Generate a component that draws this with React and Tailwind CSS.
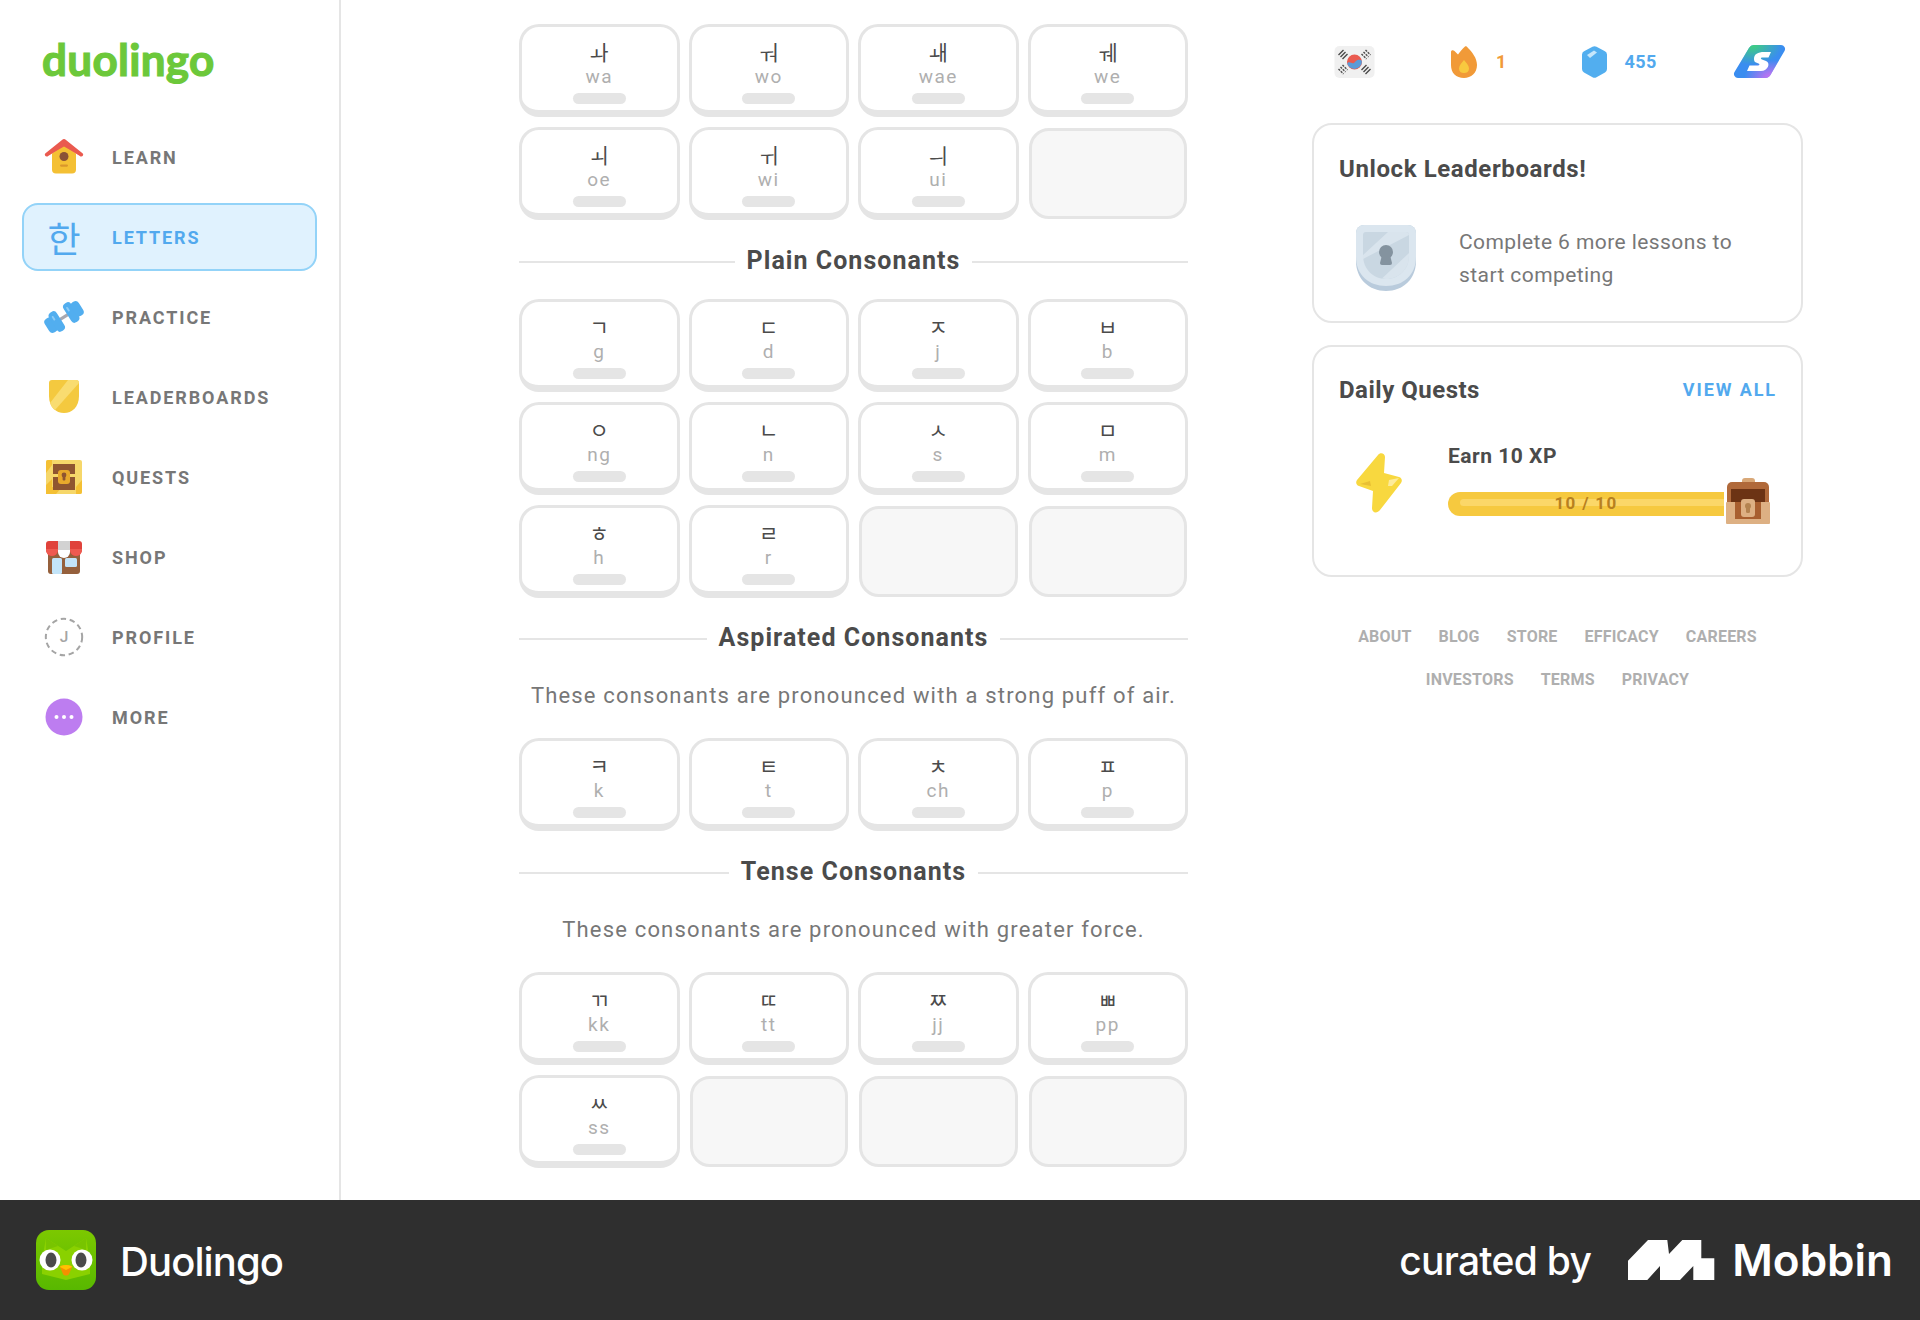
import React from 'react';

const DIN = 'font-[Roboto,"Noto_Sans_CJK_KR",sans-serif]';

function HouseIcon() {
  return (
    <svg width="40" height="40" viewBox="0 0 40 40">
      <g transform="translate(0 1.5)">
        <path d="M8 15 L20 6 L32 15 V31 a4 4 0 0 1 -4 4 H12 a4 4 0 0 1 -4 -4 Z" fill="#f4c034" />
        <path d="M1 17 a2 2 0 0 1 .8 -2.6 L18 1.5 a3 3 0 0 1 4 0 L38.200 14.4 a2 2 0 0 1 .8 2.6 c-.8 1.3 -2.2 1.3 -3.2 .5 L20 7 L4.200 17.5 c-1 .8 -2.4 .8 -3.2 -.5 Z" fill="#ea5a4f" />
        <path d="M20 5 L35 16.500 L20 8 L5 16.500 Z" fill="#ea5a4f" />
        <circle cx="20" cy="18" r="4.5" fill="#8a5236" />
        <rect x="16" y="26" width="8" height="2.2" rx="1.1" fill="#d9962b" />
      </g>
    </svg>
  );
}

function DumbbellIcon() {
  return (
    <svg width="40" height="40" viewBox="0 0 40 40">
      <g transform="rotate(-32 20 20)">
        <rect x="8" y="18.500" width="24" height="3" fill="#a8a8b0" />
        <rect x="0" y="12" width="9" height="16" rx="4" fill="#52aeef" />
        <rect x="7" y="9" width="9" height="22" rx="4" fill="#52aeef" />
        <rect x="24" y="9" width="9" height="22" rx="4" fill="#52aeef" />
        <rect x="31" y="12" width="9" height="16" rx="4" fill="#52aeef" />
        <rect x="9.500" y="13" width="2" height="5" rx="1" fill="#8ccbf6" />
        <rect x="26.500" y="13" width="2" height="5" rx="1" fill="#8ccbf6" />
      </g>
    </svg>
  );
}

function BoardIcon() {
  return (
    <svg width="40" height="40" viewBox="0 0 40 40">
      <path d="M5 6 a3 3 0 0 1 3 -3 H32 a3 3 0 0 1 3 3 V19 C35 30 28 36 20 36 S5 30 5 19 Z" fill="#f4c93f" />
      <path d="M24 3 H32 a3 3 0 0 1 3 3 V6 L11 33 C9 32 7 29 6 26 Z" fill="#f9dc70" />
    </svg>
  );
}

function ChestIcon() {
  return (
    <svg width="40" height="40" viewBox="0 0 40 40">
      <rect x="2" y="3" width="36" height="34" rx="2" fill="#f6d76a" />
      <path d="M2 5 a2 2 0 0 1 2 -2 H8 V8 L2 16 Z M32 37 V30 L38 23 V35 a2 2 0 0 1 -2 2 Z M2 37 V28 L8 22 V30 H18 L12 37 Z" fill="#f4c034" />
      <rect x="9" y="7" width="22" height="26" fill="#8f5530" />
      <rect x="9" y="17" width="22" height="3" fill="#f6d76a" />
      <rect x="14" y="13" width="12" height="14" rx="3" fill="#e8a92c" />
      <circle cx="20" cy="18" r="2.4" fill="#8f5530" />
      <rect x="18.6" y="18" width="2.8" height="5.5" rx="1" fill="#8f5530" />
    </svg>
  );
}

function ShopIcon() {
  return (
    <svg width="40" height="40" viewBox="0 0 40 40">
      <rect x="4" y="12" width="32" height="25" rx="3" fill="#95603c" />
      <rect x="8" y="21" width="10" height="16" rx="1.5" fill="#c3e4f8" />
      <rect x="21" y="21" width="12" height="9" rx="1.5" fill="#c3e4f8" />
      <path d="M2 7 a3 3 0 0 1 3 -3 H14 V13 a6 6 0 0 1 -12 0 Z" fill="#e0423b" />
      <path d="M26 4 H35 a3 3 0 0 1 3 3 V13 a6 6 0 0 1 -12 0 Z" fill="#e0423b" />
      <path d="M14 4 H26 V15 a6 6 0 0 1 -12 0 Z" fill="#fff" />
      <rect x="14" y="4" width="12" height="9" fill="#d2d2d2" />
      <path d="M2 12 H14 V13 a6 6 0 0 1 -12 0 Z M26 12 H38 V13 a6 6 0 0 1 -12 0 Z" fill="#ee5a50" />
    </svg>
  );
}

function ProfileIcon() {
  return (
    <svg width="44" height="44" viewBox="0 0 44 44">
      <circle cx="22" cy="22" r="20" fill="none" stroke="#a5a5a5" strokeWidth="2.200" strokeDasharray="6 4" />
      <text x="22" y="28" textAnchor="middle" fontSize="17" fontWeight="500" fill="#a5a5a5" fontFamily="Roboto, sans-serif">J</text>
    </svg>
  );
}

function MoreIcon() {
  return (
    <svg width="40" height="40" viewBox="0 0 40 40">
      <circle cx="20" cy="20" r="18.5" fill="#bd7df0" />
      <circle cx="12.5" cy="20" r="2" fill="#fff" />
      <circle cx="20" cy="20" r="2" fill="#fff" />
      <circle cx="27.5" cy="20" r="2" fill="#fff" />
    </svg>
  );
}

function FlagIcon() {
  return (
    <svg width="41" height="32" viewBox="0 0 40 32">
      <rect width="40" height="32" rx="5" fill="#f0f0f0" />
      <circle cx="20" cy="16" r="7.5" fill="#ea5a4f" />
      <path d="M12.7 17.5 C15 14 18 19.5 20.5 16 C23 13 26 13.5 27.4 15 A7.5 7.5 0 0 1 12.7 17.5 Z" fill="#5a9bd8" />
      <g stroke="#4b4b4b" strokeWidth="1.4">
        <path d="M4 9 L9 4 M6 11 L11 6 M8 13 L13 8" />
        <path d="M27 8 L32 13 M29 6 L34 11 M31 4 L36 9" strokeDasharray="2.2 1" />
        <path d="M4 23 L9 28 M6 21 L11 26 M8 19 L13 24" strokeDasharray="2.2 1" />
        <path d="M27 24 L32 19 M29 26 L34 21 M31 28 L36 23" />
      </g>
    </svg>
  );
}

function FireIcon() {
  return (
    <svg width="26" height="32" viewBox="0 0 26 32">
      <path d="M14 0.5 C15 0 16 0.5 17 2 C21 6 26 12 26 19 C26 27 20 32 13 32 C5 32 0 27 0 19 V6 C0 4 2 3.5 3.5 5 L7 8.5 C9 6 11 3 14 .5 Z" fill="#f19a38" />
      <path d="M13 14 C15 16.5 18 19.5 18 22.5 C18 25.5 16 27 13 27 C10 27 8 25.5 8 22.5 C8 19.5 11 16.5 13 14 Z" fill="#f8c93f" />
    </svg>
  );
}

function GemIcon() {
  return (
    <svg width="25" height="32" viewBox="0 0 25 32">
      <path d="M10.5 .8 a4 4 0 0 1 4 0 L22.5 5 A4 4 0 0 1 25 8.5 V23 a4 4 0 0 1 -2 3.5 L14.500 31.200 a4 4 0 0 1 -4 0 L2 26.500 A4 4 0 0 1 0 23 V8.500 A4 4 0 0 1 2.500 5 Z" fill="#52aeef" />
      <path d="M5 9 L12 4.500 L15 6.500 L8 12 Z" fill="#c5e6fb" />
    </svg>
  );
}

function SuperIcon() {
  const shape = 'M16 3 a6 6 0 0 1 5 -3 H48 a4 4 0 0 1 3.500 6 L38 29 a7 7 0 0 1 -6 4 H5 a4 4 0 0 1 -3.500 -6 Z';
  return (
    <svg width="53" height="33" viewBox="0 0 53 33">
      <defs>
        <radialGradient id="superGreen" cx="0.35" cy="0" r="0.6">
          <stop offset="0" stopColor="#3fd27a" />
          <stop offset="1" stopColor="#3fd27a" stopOpacity="0" />
        </radialGradient>
        <radialGradient id="superPink" cx="0.75" cy="1" r="0.55">
          <stop offset="0" stopColor="#d96cf2" />
          <stop offset="1" stopColor="#d96cf2" stopOpacity="0" />
        </radialGradient>
      </defs>
      <path d={shape} fill="#3a8df0" />
      <path d={shape} fill="url(#superGreen)" />
      <path d={shape} fill="url(#superPink)" />
      <path d="M21 14 C21 9 25 7 31 7 H38 L35.500 12.500 H29 C27.500 12.500 27.500 14 29 14.500 L33 16 C38 18 35 26 28 26 H14 L16.500 20.500 H25 C26.500 20.500 27 19 25.500 18.500 L23 17.500 C21.500 17 21 15.500 21 14 Z" fill="#fff" />
    </svg>
  );
}

function ShieldIcon() {
  return (
    <svg width="60" height="66" viewBox="0 0 60 66">
      <path d="M0 8 a8 8 0 0 1 8 -8 H52 a8 8 0 0 1 8 8 V36 C60 54 47 66 30 66 S0 54 0 36 Z" fill="#b9cbdc" />
      <path d="M0 8 a8 8 0 0 1 8 -8 H52 a8 8 0 0 1 8 8 V32 C60 50 47 61 30 61 S0 50 0 32 Z" fill="#dbe6ef" />
      <path d="M7 10 a3 3 0 0 1 3 -3 H50 a3 3 0 0 1 3 3 V30 C53 44 43 54 30 54 S7 44 7 30 Z" fill="#c9d7e2" />
      <path d="M32 7 H50 a3 3 0 0 1 3 3 L7 34 V30 Z M53 28 V31 C53 44 43 54 30 54 a22 22 0 0 1 -4 -.4 Z" fill="#d9e4ed" />
      <circle cx="30" cy="27" r="7" fill="#84939f" />
      <path d="M26 30 H34 L36 38 a2 2 0 0 1 -2 2 H26 a2 2 0 0 1 -2 -2 Z" fill="#84939f" />
    </svg>
  );
}

function BoltIcon() {
  return (
    <svg width="46" height="60" viewBox="0 0 46 60">
      <path d="M22 2 C24 -1 29 0 29 4 L28 20 L43 24 C46 25 46.500 28 45 30 L24 57 C21 61 16 60 16 55 L17 38 L3 33 C0 32 -.5 29 1 27 Z" fill="#f8d83f" />
      <path d="M33 27 L43 25 L36 33 L32 33 Z" fill="#fdeb9a" />
      <path d="M14 28 L4 31 L15 33 Z" fill="#e8bf34" />
    </svg>
  );
}

function ChestSmall() {
  return (
    <svg width="44" height="46" viewBox="0 0 44 46">
      <rect x="16" y="0" width="13" height="8" rx="3" fill="#d9a878" />
      <path d="M1 9 a5 5 0 0 1 5 -5 H38 a5 5 0 0 1 5 5 V32 H1 Z" fill="#b0693a" />
      <rect x="5" y="11" width="34" height="16" fill="#6c3314" />
      <rect x="0" y="24" width="44" height="22" rx="1" fill="#ddb083" />
      <rect x="9" y="24" width="26" height="17" fill="#a85f2f" />
      <rect x="15" y="21" width="14" height="18" rx="3" fill="#ddb083" />
      <circle cx="22" cy="28" r="3" fill="#b48350" />
      <rect x="20" y="28" width="4" height="7" rx="1.5" fill="#b48350" />
    </svg>
  );
}

function OwlLogo() {
  return (
    <svg width="60" height="60" viewBox="0 0 60 60">
      <defs>
        <linearGradient id="owl" x1="0" y1="0" x2="0" y2="1">
          <stop offset="0" stopColor="#7cc800" />
          <stop offset="1" stopColor="#58b800" />
        </linearGradient>
      </defs>
      <rect width="60" height="60" rx="13" fill="url(#owl)" />
      <path d="M10 8 L30 21 L50 8 L54 30 L54 44 L30 50 L6 44 L6 30 Z" fill="#8ad100" />
      <path d="M10 8 L22 16 L10 20 Z M50 8 L38 16 L50 20 Z" fill="#78c400" />
      <circle cx="14" cy="30" r="10.500" fill="#fff" />
      <circle cx="46" cy="30" r="10.500" fill="#fff" />
      <ellipse cx="15" cy="30" rx="5.500" ry="7.500" fill="#4b4b4b" />
      <ellipse cx="45" cy="30" rx="5.500" ry="7.500" fill="#4b4b4b" />
      <path d="M24 37 C24 36 26 35 30 35 S36 36 36 37 L33 44 C32 46 28 46 27 44 Z" fill="#f49000" />
      <path d="M24 37 C24 36 26 35 30 35 S36 36 36 37 L30 40 Z" fill="#ffc200" />
    </svg>
  );
}

function MobbinLogo() {
  return (
    <svg width="87" height="40" viewBox="0 0 87 40">
      <path d="M0 40 V20.700 L20 0 H39.300 L41 14 L54.300 0 H73.300 V18.300 H86.300 V40 H65.300 V26 L52 40 H32 V26 L19.300 40 Z" fill="#fff" />
    </svg>
  );
}

const NAV = [
  { label: 'LEARN', icon: <HouseIcon /> },
  { label: 'LETTERS', active: true },
  { label: 'PRACTICE', icon: <DumbbellIcon /> },
  { label: 'LEADERBOARDS', icon: <BoardIcon /> },
  { label: 'QUESTS', icon: <ChestIcon /> },
  { label: 'SHOP', icon: <ShopIcon /> },
  { label: 'PROFILE', icon: <ProfileIcon /> },
  { label: 'MORE', icon: <MoreIcon /> },
];

function NavItem({ item }) {
  return (
    <div
      className={`flex h-[68px] items-center rounded-[16px] border-2 pl-5 ${
        item.active ? 'border-[#93d3f8] bg-[#e0f2fe]' : 'border-transparent'
      }`}
    >
      <div className="flex w-10 items-center justify-center">
        {item.active ? (
          <span className="font-['Noto_Sans_CJK_KR'] text-[36px] leading-none text-[#52a9ee]">한</span>
        ) : (
          item.icon
        )}
      </div>
      <span
        className={`ml-7 text-[18px] font-bold tracking-[1.9px] ${
          item.active ? 'text-[#52a9ee]' : 'text-[#777777]'
        }`}
      >
        {item.label}
      </span>
    </div>
  );
}

function Tile({ kana, roman }) {
  if (!kana) {
    return <div className="mx-[1px] mt-[1px] h-[91px] rounded-[20px] border-[3px] border-[#e5e5e5] bg-[#f7f7f7]" />;
  }
  return (
    <div className="flex h-[93px] flex-col items-center rounded-[20px] border-[3px] border-b-[7px] border-[#e5e5e5] bg-white pt-[10px]">
      <span className="font-['Noto_Sans_CJK_KR'] text-[21px] leading-[28px] text-[#4b4b4b]">{kana}</span>
      <span className="mt-[-1px] text-[19px] leading-[26px] tracking-[1.5px] text-[#afafaf]">{roman}</span>
      <span className="mt-[3px] h-[11px] w-[53px] rounded-full bg-[#e5e5e5]" />
    </div>
  );
}

function TileGrid({ tiles, className }) {
  return (
    <div className={`grid grid-cols-4 gap-x-[9px] gap-y-[10px] ${className}`}>
      {tiles.map(([kana, roman], i) => (
        <Tile key={i} kana={kana} roman={roman} />
      ))}
    </div>
  );
}

function SectionHeading({ children, className }) {
  return (
    <div className={`flex h-[30px] items-center gap-3 ${className}`}>
      <div className="mt-[2px] h-[2px] flex-1 bg-[#e5e5e5]" />
      <h2 className="text-[25px] font-bold leading-[30px] tracking-[1.05px] text-[#4b4b4b]">{children}</h2>
      <div className="mt-[2px] h-[2px] flex-1 bg-[#e5e5e5]" />
    </div>
  );
}

function Note({ children, className }) {
  return <p className={`text-center text-[22px] leading-[30px] tracking-[1.18px] text-[#777777] ${className}`}>{children}</p>;
}

const VOWELS = [['ㅘ', 'wa'], ['ㅝ', 'wo'], ['ㅙ', 'wae'], ['ㅞ', 'we'], ['ㅚ', 'oe'], ['ㅟ', 'wi'], ['ㅢ', 'ui'], []];
const PLAIN = [['ㄱ', 'g'], ['ㄷ', 'd'], ['ㅈ', 'j'], ['ㅂ', 'b'], ['ㅇ', 'ng'], ['ㄴ', 'n'], ['ㅅ', 's'], ['ㅁ', 'm'], ['ㅎ', 'h'], ['ㄹ', 'r'], [], []];
const ASPIRATED = [['ㅋ', 'k'], ['ㅌ', 't'], ['ㅊ', 'ch'], ['ㅍ', 'p']];
const TENSE = [['ㄲ', 'kk'], ['ㄸ', 'tt'], ['ㅉ', 'jj'], ['ㅃ', 'pp'], ['ㅆ', 'ss'], [], [], []];

const LINKS_A = ['ABOUT', 'BLOG', 'STORE', 'EFFICACY', 'CAREERS'];
const LINKS_B = ['INVESTORS', 'TERMS', 'PRIVACY'];

export default function App() {
  return (
    <div className={`flex min-h-[1320px] flex-col bg-white ${DIN}`}>
      <div className="flex h-[1200px]">
        <aside className="w-[341px] shrink-0 border-r-2 border-[#e5e5e5]">
          <div className="flex h-[123px] items-start pl-[42px] pt-[29px]">
            <span className="font-[Lato,sans-serif] text-[44px] font-bold leading-[60px] tracking-[0.3px] text-[#6cc83a] [-webkit-text-stroke:1.2px_#6cc83a]">
              duolingo
            </span>
          </div>
          <nav className="ml-[22px] flex w-[295px] flex-col gap-3">
            {NAV.map((item) => (
              <NavItem key={item.label} item={item} />
            ))}
          </nav>
        </aside>

        <main className="ml-[178px] w-[669px] shrink-0 pt-6">
          <TileGrid tiles={VOWELS} />
          <SectionHeading className="mt-[26px]">Plain Consonants</SectionHeading>
          <TileGrid tiles={PLAIN} className="mt-[23px]" />
          <SectionHeading className="mt-[25px]">Aspirated Consonants</SectionHeading>
          <Note className="mt-[28px]">These consonants are pronounced with a strong puff of air.</Note>
          <TileGrid tiles={ASPIRATED} className="mt-[27px]" />
          <SectionHeading className="mt-[26px]">Tense Consonants</SectionHeading>
          <Note className="mt-[28px]">These consonants are pronounced with greater force.</Note>
          <TileGrid tiles={TENSE} className="mt-[27px]" />
        </main>

        <section className="ml-[124px] w-[491px] shrink-0 pt-[45px]">
          <div className="flex h-[33px] items-center justify-between pl-[22px] pr-[17px]">
            <FlagIcon />
            <div className="flex items-center gap-[19px]">
              <FireIcon />
              <span className="text-[18px] font-bold text-[#f19a38]">1</span>
            </div>
            <div className="flex items-center gap-[17px]">
              <GemIcon />
              <span className="text-[18px] font-bold tracking-[0.5px] text-[#52a9ee]">455</span>
            </div>
            <SuperIcon />
          </div>

          <div className="mt-[45px] h-[200px] rounded-[20px] border-2 border-[#e5e5e5] pl-[25px] pr-6 pt-[29px]">
            <h3 className="text-[24px] font-bold leading-[30px] tracking-[0.6px] text-[#4b4b4b]">Unlock Leaderboards!</h3>
            <div className="mt-[41px] flex items-start">
              <div className="ml-[17px] shrink-0">
                <ShieldIcon />
              </div>
              <p className="ml-[43px] pt-[1px] text-[21px] leading-[33px] tracking-[0.42px] text-[#777777]">
                Complete 6 more lessons to
                <br />
                start competing
              </p>
            </div>
          </div>

          <div className="mt-[22px] h-[232px] rounded-[20px] border-2 border-[#e5e5e5] pl-[25px] pr-6 pt-[28px]">
            <div className="flex items-center justify-between">
              <h3 className="text-[24px] font-bold leading-[30px] tracking-[0.5px] text-[#4b4b4b]">Daily Quests</h3>
              <span className="mt-[-2px] text-[18px] font-bold tracking-[1.9px] text-[#52a9ee]">VIEW ALL</span>
            </div>
            <div className="mt-[37px] flex items-start">
              <div className="ml-[17px] mt-[11px] shrink-0">
                <BoltIcon />
              </div>
              <div className="ml-[46px] flex-1">
                <div className="text-[21px] font-bold leading-[28px] tracking-[0.5px] text-[#4b4b4b]">Earn 10 XP</div>
                <div className="relative mt-[22px] h-[24px] w-[276px]">
                  <div className="h-full rounded-l-full bg-[#f6c93f] pl-3 pt-[7px]">
                    <div className="h-[7px] rounded-l-full bg-[#fbd768]" />
                  </div>
                  <span className="absolute inset-0 flex items-center justify-center text-[17px] font-bold tracking-[1.3px] text-[#b8801f]">
                    10 / 10
                  </span>
                  <div className="absolute left-[278px] top-[-14px]">
                    <ChestSmall />
                  </div>
                </div>
              </div>
            </div>
          </div>

          <div className="mt-[48px] flex flex-col items-center gap-[19px]">
            {[LINKS_A, LINKS_B].map((links, i) => (
              <div key={i} className="flex gap-[27px] text-[16px] font-bold leading-[24px] tracking-[0.2px] text-[#afafaf]">
                {links.map((link) => (
                  <span key={link}>{link}</span>
                ))}
              </div>
            ))}
          </div>
        </section>
      </div>

      <footer className="flex h-[120px] items-center justify-between bg-[#2f2f2f] pl-9 pr-[27px] font-[Inter,sans-serif] text-white">
        <div className="flex items-center">
          <OwlLogo />
          <span className="ml-[24px] pt-[3px] text-[40px] font-medium tracking-[-0.9px]">Duolingo</span>
        </div>
        <div className="flex items-center">
          <span className="pt-[3px] text-[39px] font-medium tracking-[-0.7px]">curated by</span>
          <div className="ml-[37px]">
            <MobbinLogo />
          </div>
          <span className="ml-[17px] text-[44px] font-semibold">Mobbin</span>
        </div>
      </footer>
    </div>
  );
}
